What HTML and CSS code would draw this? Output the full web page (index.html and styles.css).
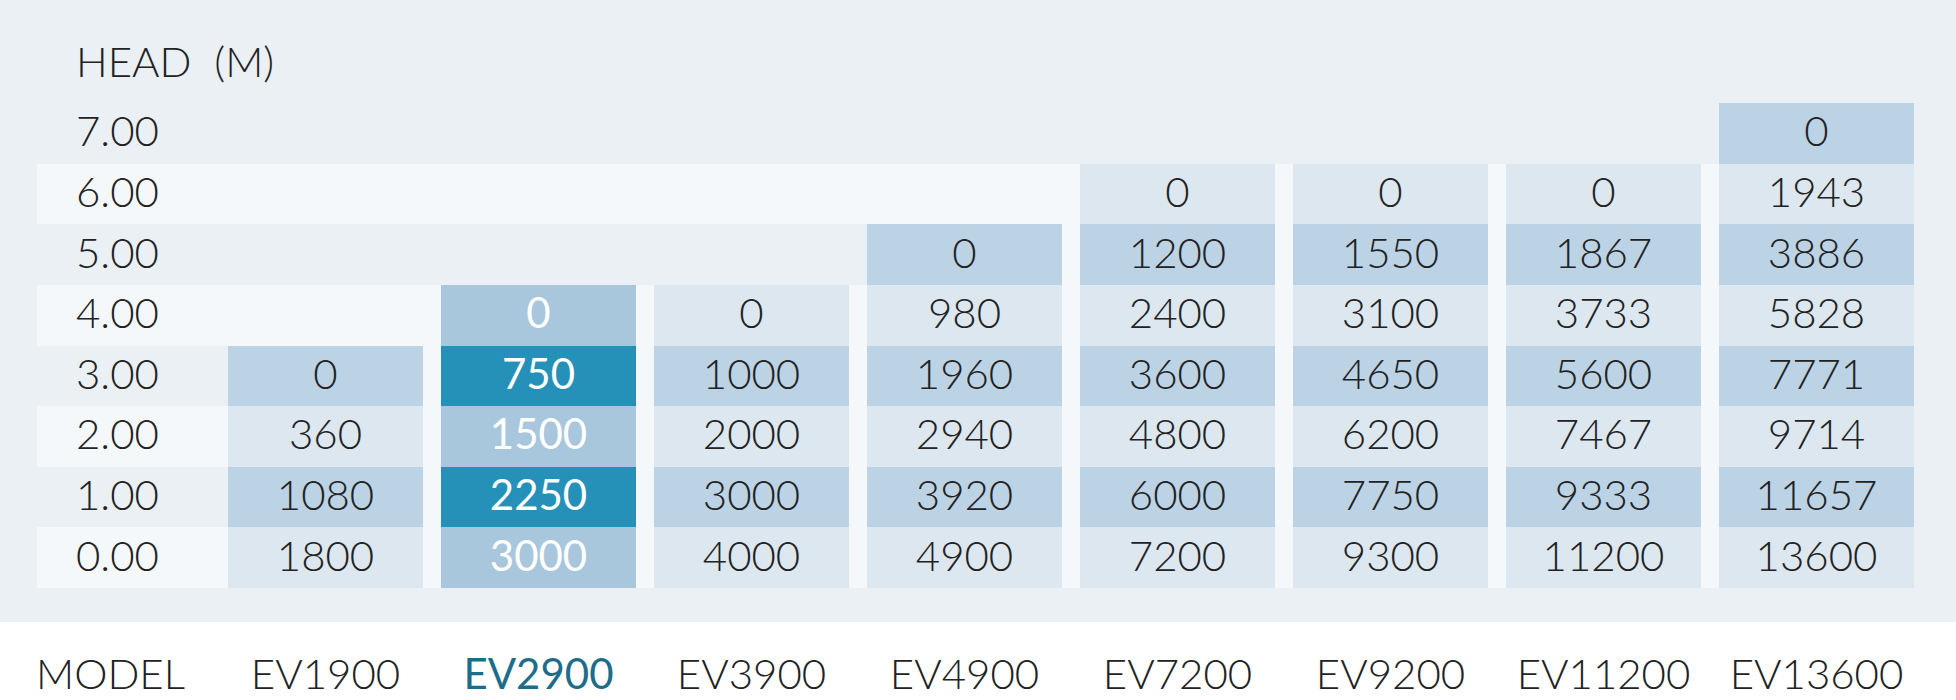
FILE: index.html
```html
<!DOCTYPE html>
<html lang="en">
<head>
<meta charset="utf-8">
<title>Head / Flow chart</title>
<link rel="stylesheet" href="styles.css">
</head>
<body>
<div class="chart">
  <div class="title">HEAD&nbsp;&nbsp;(M)</div>
  <div class="table">
    <div class="row odd">
      <div class="lbl">7.00</div>
      <div class="c"></div><div class="c"></div><div class="c"></div><div class="c"></div><div class="c"></div><div class="c"></div><div class="c"></div>
      <div class="c f">0</div>
    </div>
    <div class="row even">
      <div class="lbl">6.00</div>
      <div class="c"></div><div class="c"></div><div class="c"></div><div class="c"></div>
      <div class="c f">0</div><div class="c f">0</div><div class="c f">0</div><div class="c f">1943</div>
    </div>
    <div class="row odd">
      <div class="lbl">5.00</div>
      <div class="c"></div><div class="c"></div><div class="c"></div>
      <div class="c f">0</div><div class="c f">1200</div><div class="c f">1550</div><div class="c f">1867</div><div class="c f">3886</div>
    </div>
    <div class="row even">
      <div class="lbl">4.00</div>
      <div class="c"></div>
      <div class="c f hl">0</div><div class="c f">0</div><div class="c f">980</div><div class="c f">2400</div><div class="c f">3100</div><div class="c f">3733</div><div class="c f">5828</div>
    </div>
    <div class="row odd">
      <div class="lbl">3.00</div>
      <div class="c f">0</div><div class="c f hl">750</div><div class="c f">1000</div><div class="c f">1960</div><div class="c f">3600</div><div class="c f">4650</div><div class="c f">5600</div><div class="c f">7771</div>
    </div>
    <div class="row even">
      <div class="lbl">2.00</div>
      <div class="c f">360</div><div class="c f hl">1500</div><div class="c f">2000</div><div class="c f">2940</div><div class="c f">4800</div><div class="c f">6200</div><div class="c f">7467</div><div class="c f">9714</div>
    </div>
    <div class="row odd">
      <div class="lbl">1.00</div>
      <div class="c f">1080</div><div class="c f hl">2250</div><div class="c f">3000</div><div class="c f">3920</div><div class="c f">6000</div><div class="c f">7750</div><div class="c f">9333</div><div class="c f">11657</div>
    </div>
    <div class="row even">
      <div class="lbl">0.00</div>
      <div class="c f">1800</div><div class="c f hl">3000</div><div class="c f">4000</div><div class="c f">4900</div><div class="c f">7200</div><div class="c f">9300</div><div class="c f">11200</div><div class="c f">13600</div>
    </div>
  </div>
</div>
<div class="models">
  <div class="mlbl">MODEL</div>
  <div class="m">EV1900</div>
  <div class="m sel">EV2900</div>
  <div class="m">EV3900</div>
  <div class="m">EV4900</div>
  <div class="m">EV7200</div>
  <div class="m">EV9200</div>
  <div class="m">EV11200</div>
  <div class="m">EV13600</div>
</div>
</body>
</html>
```
FILE: styles.css
```css
* { box-sizing: border-box; }
html, body { margin: 0; padding: 0; background: #ffffff; }
body {
  width: 1956px;
  height: 700px;
  overflow: hidden;
  font-family: Lato, "Open Sans", "DejaVu Sans", sans-serif;
  font-weight: 300;
  font-size: 42px;
  color: #222222;
}
.chart {
  background: #ebf0f5;
  height: 622px;
  padding: 36px 0 0 37px;
}
.title {
  line-height: 50px;
  height: 50px;
  padding-left: 39px;
  margin-bottom: 17px;
}
.table {
  display: flex;
  flex-direction: column;
}
.row {
  display: flex;
  height: 60.625px;
  width: 1877px;
}
.row.even { background: #f4f8fb; }
.lbl {
  width: 191px;
  padding-left: 39px;
  padding-bottom: 6px;
  display: flex;
  align-items: center;
}
.c {
  width: 213px;
  border-left: 18px solid transparent;
  background-clip: padding-box;
  padding-bottom: 6px;
  display: flex;
  align-items: center;
  justify-content: center;
}
.lbl + .c { width: 195px; border-left-width: 0; }
.c.f + .c.f { border-left-color: #f4f8fb; }
.odd .c.f { background-color: #bcd3e5; }
.even .c.f { background-color: #dde7f0; }
.c.hl { color: #ffffff; font-weight: 400; }
.even .c.hl { background-color: #a8c6dc; }
.odd .c.hl { background-color: #2590b8; }
.models {
  display: flex;
  padding: 26px 0 0 36px;
  line-height: 50px;
}
.mlbl { width: 192px; }
.m {
  width: 213px;
  border-left: 18px solid transparent;
  text-align: center;
}
.mlbl + .m { width: 195px; border-left-width: 0; }
.m.sel { color: #1d6d8a; font-weight: 400; }
```
